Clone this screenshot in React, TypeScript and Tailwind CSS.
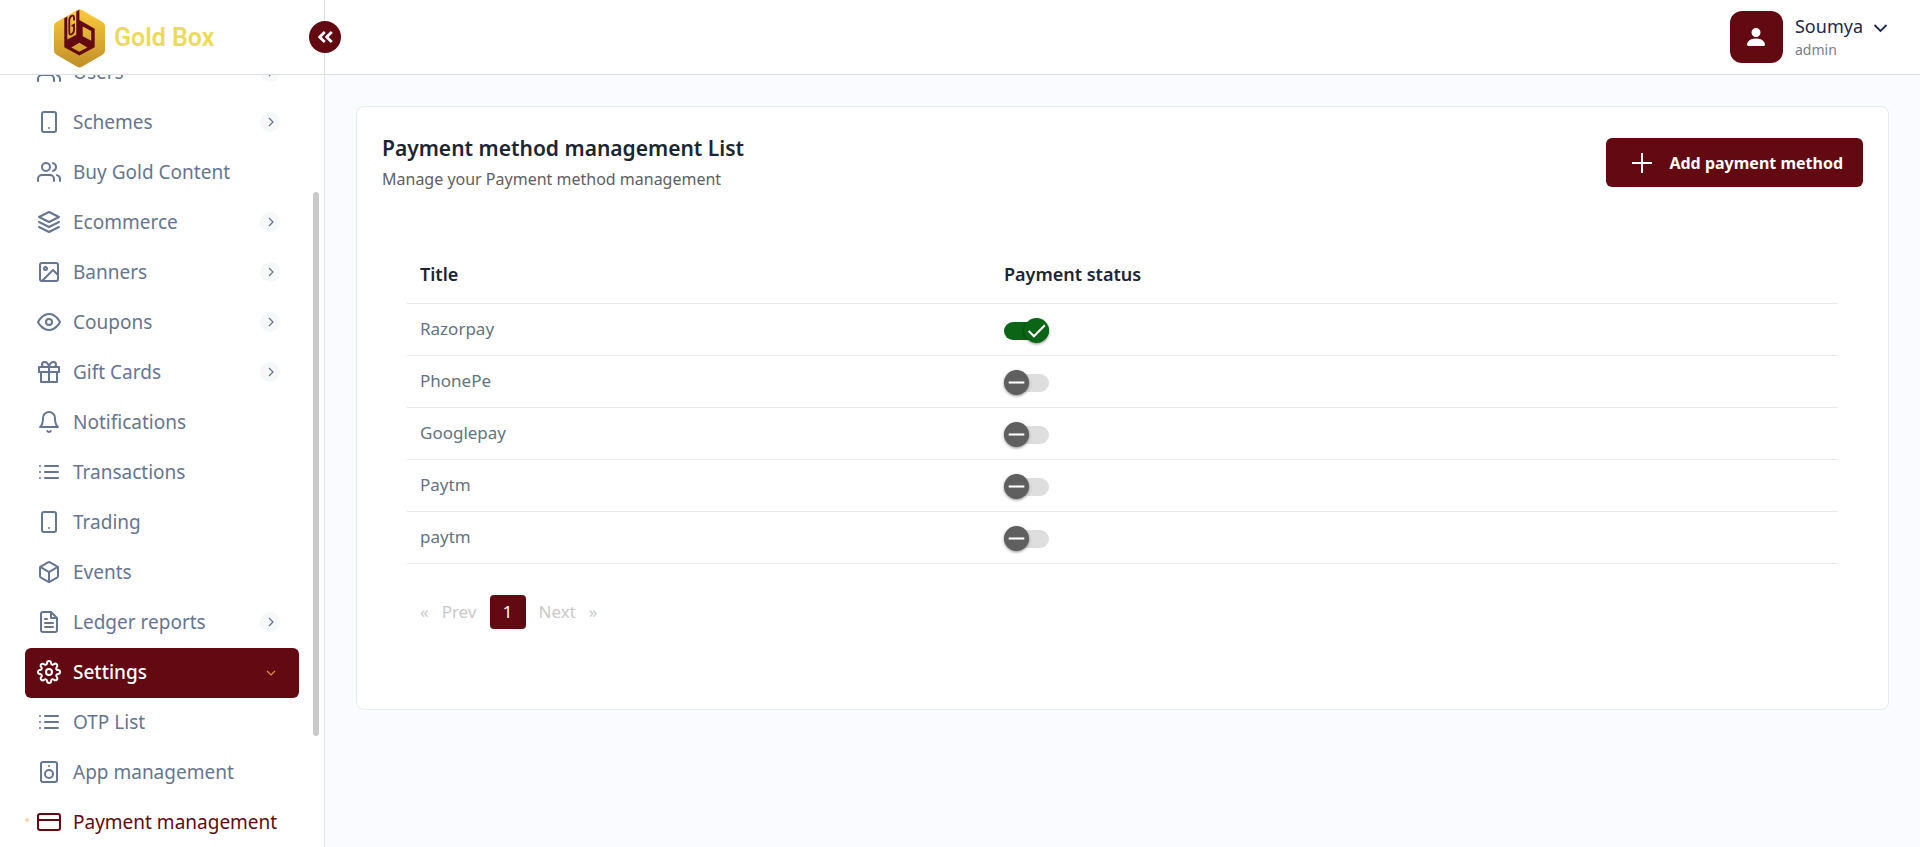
import { useState } from "react";
import {
  FiBell,
  FiBox,
  FiCreditCard,
  FiEye,
  FiFileText,
  FiGift,
  FiImage,
  FiLayers,
  FiList,
  FiSettings,
  FiSmartphone,
  FiSpeaker,
  FiUsers,
} from "react-icons/fi";
import { BsPersonFill } from "react-icons/bs";
import type { IconType } from "react-icons";

type NavItem = {
  label: string;
  icon: IconType;
  expandable?: boolean;
  state?: "open" | "current";
};

const navItems: NavItem[] = [
  { label: "Users", icon: FiUsers, expandable: true },
  { label: "Schemes", icon: FiSmartphone, expandable: true },
  { label: "Buy Gold Content", icon: FiUsers },
  { label: "Ecommerce", icon: FiLayers, expandable: true },
  { label: "Banners", icon: FiImage, expandable: true },
  { label: "Coupons", icon: FiEye, expandable: true },
  { label: "Gift Cards", icon: FiGift, expandable: true },
  { label: "Notifications", icon: FiBell },
  { label: "Transactions", icon: FiList },
  { label: "Trading", icon: FiSmartphone },
  { label: "Events", icon: FiBox },
  { label: "Ledger reports", icon: FiFileText, expandable: true },
  { label: "Settings", icon: FiSettings, expandable: true, state: "open" },
  { label: "OTP List", icon: FiList },
  { label: "App management", icon: FiSpeaker },
  { label: "Payment management", icon: FiCreditCard, state: "current" },
];

const initialMethods = [
  { id: 1, title: "Razorpay", enabled: true },
  { id: 2, title: "PhonePe", enabled: false },
  { id: 3, title: "Googlepay", enabled: false },
  { id: 4, title: "Paytm", enabled: false },
  { id: 5, title: "paytm", enabled: false },
];

function Logo() {
  return (
    <svg viewBox="0 0 53 60" className="h-[60px] w-[53px]" aria-hidden="true">
      <defs>
        <linearGradient id="gold" x1="0" y1="0" x2="0" y2="1">
          <stop offset="0" stopColor="#fcca3c" />
          <stop offset="1" stopColor="#c08f28" />
        </linearGradient>
      </defs>
      <path
        d="M24.1 2 Q26.5 .8 28.9 2 L49.5 14 Q52 15.4 52 18.4 V42.4 Q52 45.4 49.5 46.8 L28.9 58.8 Q26.5 60 24.1 58.8 L3.5 46.8 Q1 45.4 1 42.4 V18.4 Q1 15.4 3.5 14 Z"
        fill="url(#gold)"
      />
      <path
        fillRule="evenodd"
        fill="#620912"
        d="M11.3 10.2 L14.3 8.4 V31.5 L23.3 26.8 V3.4 L26.4 1.6 V12 L41.7 20.8 V39.2 L26.4 47.6 L11.3 39.2 Z M29.7 18.6 V28.2 L38.2 32.8 V23 Z M26.4 34.8 L18.3 39.4 L26.4 43.8 L34.4 39.4 Z"
      />
      <path
        d="M21 12.5 V10 Q21 6.6 18.6 7.9 Q16.3 9.2 16.3 12.4 V24.2 Q16.3 27.4 18.6 26.2 Q21 25 21 21.8 V16.8 L18.6 18.1"
        fill="none"
        stroke="#620912"
        strokeWidth="1.8"
      />
    </svg>
  );
}

function Chevron({ open }: { open?: boolean }) {
  return (
    <span
      className={
        open
          ? "flex size-5 items-center justify-center text-[#e0913f]"
          : "flex size-5 items-center justify-center rounded-full bg-[#f5f7f9] text-[#64748b]"
      }
    >
      <svg
        viewBox="0 0 12 12"
        className={open ? "ml-0.5 mt-0.5 size-3 rotate-90" : "ml-0.5 size-3"}
        fill="none"
        stroke="currentColor"
        strokeWidth="1.2"
        aria-hidden="true"
      >
        <path d="M4 2 L8 6 L4 10" />
      </svg>
    </span>
  );
}

function NavLink({ item }: { item: NavItem }) {
  const Icon = item.icon;
  const tone =
    item.state === "open"
      ? "bg-[#620912] font-medium text-white"
      : item.state === "current"
        ? "text-[#620912]"
        : "text-[#667590]";
  return (
    <li>
      <a
        href="#"
        aria-current={item.state === "current" ? "page" : undefined}
        className={`relative flex h-[50px] items-center gap-3 rounded-md pb-0.5 pl-3 pr-[19px] text-[19px] ${tone}`}
      >
        {item.state === "current" && (
          <span className="absolute left-0 top-[20px] size-1 rounded-full bg-[#ffd3a8]" />
        )}
        <Icon className="size-6 shrink-0" aria-hidden="true" />
        <span className="flex-1 whitespace-nowrap">{item.label}</span>
        {item.expandable && <Chevron open={item.state === "open"} />}
      </a>
    </li>
  );
}

function Sidebar() {
  return (
    <aside className="relative w-[325px] shrink-0 overflow-hidden border-r border-[#e2e6ea] bg-white">
      <nav aria-label="Main">
        <ul className="-mt-[27px] px-[25px]">
          {navItems.map((item) => (
            <NavLink key={item.label} item={item} />
          ))}
        </ul>
      </nav>
      <div className="absolute right-[5px] top-[117px] h-[544px] w-1.5 rounded-full bg-[#c9c9c9]" />
    </aside>
  );
}

function Header() {
  return (
    <header className="flex h-[75px] shrink-0 border-b border-[#dcdfe3] bg-white">
      <div className="relative flex w-[325px] items-center gap-2 border-r border-[#dcdfe3] pl-[53px] pt-0.5">
        <Logo />
        <span className="font-['Roboto',sans-serif] text-[25px] font-semibold text-[#ecdb57]">
          Gold Box
        </span>
        <button
          type="button"
          aria-label="Collapse sidebar"
          className="absolute -right-[17px] top-[21px] flex size-8 items-center justify-center rounded-full bg-[#620912] text-white"
        >
          <svg
            viewBox="0 0 16 12"
            className="h-3 w-4"
            fill="none"
            stroke="currentColor"
            strokeWidth="2.8"
            strokeLinejoin="round"
            aria-hidden="true"
          >
            <path d="M7.8 1 L2.6 6 L7.8 11 M14.8 1 L9.6 6 L14.8 11" />
          </svg>
        </button>
      </div>
      <div className="flex flex-1 items-center justify-end pr-8">
        <button type="button" className="flex items-center gap-3 text-left">
          <span className="flex h-[52px] w-[53px] items-center justify-center rounded-xl bg-[#620912] text-white">
            <BsPersonFill className="size-6" aria-hidden="true" />
          </span>
          <span className="flex flex-col pt-0.5">
            <span className="flex items-center gap-2.5 text-lg leading-6 text-[#1b2850]">
              Soumya
              <svg
                viewBox="0 0 15 14"
                className="mt-1 h-3.5 w-[15px]"
                fill="none"
                stroke="currentColor"
                strokeWidth="1.8"
                aria-hidden="true"
              >
                <path d="M1.5 4 L7.5 10 L13.5 4" />
              </svg>
            </span>
            <span className="text-sm leading-6 text-[#737f92]">admin</span>
          </span>
        </button>
      </div>
    </header>
  );
}

function StatusSwitch({
  label,
  checked,
  onChange,
}: {
  label: string;
  checked: boolean;
  onChange: () => void;
}) {
  return (
    <label className="relative mt-1 flex h-[26px] w-[45px] cursor-pointer items-center">
      <input
        type="checkbox"
        role="switch"
        aria-label={`${label} status`}
        checked={checked}
        onChange={onChange}
        className={`h-[18px] w-full cursor-pointer appearance-none rounded-full ${checked ? "bg-[#0b6516]" : "bg-[#dedede]"}`}
      />
      <span
        className={`pointer-events-none absolute top-0 flex size-[25px] items-center justify-center rounded-full text-white shadow-[0_1px_3px_rgba(0,0,0,0.45)] ${checked ? "right-0 bg-[#0b6516]" : "left-0 bg-[#5f5f5f]"}`}
      >
        <svg
          viewBox="0 0 24 24"
          className="size-[25px]"
          fill="none"
          stroke="currentColor"
          strokeWidth="2"
          aria-hidden="true"
        >
          {checked ? <path d="M4.5 12.5 L9.5 17.5 L20 7" /> : <path d="M4.5 12 H19.5" />}
        </svg>
      </span>
    </label>
  );
}

export default function App() {
  const [methods, setMethods] = useState(initialMethods);

  const toggle = (id: number) =>
    setMethods((list) =>
      list.map((m) => (m.id === id ? { ...m, enabled: !m.enabled } : m)),
    );

  return (
    <div className="flex h-screen flex-col overflow-hidden bg-[#fafbfe] font-['Noto_Sans',sans-serif]">
      <Header />
      <div className="flex min-h-0 flex-1">
        <Sidebar />
        <main className="min-w-0 flex-1 px-[31px] pt-[31px]">
          <section className="rounded-lg border border-[#e5e9ed] bg-white px-[25px] pb-20 pt-[31px]">
            <div className="flex items-start justify-between">
              <div className="-mt-1.5">
                <h1 className="text-[21px] font-semibold leading-8 text-[#1b2533]">
                  Payment method management List
                </h1>
                <p className="text-base leading-[30px] text-[#5e6064]">
                  Manage your Payment method management
                </p>
              </div>
              <button
                type="button"
                className="flex h-[49px] items-center gap-4 rounded-md bg-[#620912] pl-[25px] pr-5 text-base font-bold text-white"
              >
                <svg
                  viewBox="0 0 22 22"
                  className="size-[22px]"
                  fill="none"
                  stroke="currentColor"
                  strokeWidth="2"
                  aria-hidden="true"
                >
                  <path d="M11 1 V21 M1 11 H21" />
                </svg>
                Add payment method
              </button>
            </div>

            <div className="px-[25px] pt-[52px]">
              <table className="w-full table-fixed border-collapse text-left">
                <thead>
                  <tr className="h-[57px] border-b border-[#e8e9eb] text-lg text-[#1b2533]">
                    <th className="w-[584px] px-[13px] font-semibold">Title</th>
                    <th className="px-[13px] font-semibold">Payment status</th>
                  </tr>
                </thead>
                <tbody>
                  {methods.map((m) => (
                    <tr key={m.id} className="h-[52px] border-b border-[#e8e9eb]">
                      <td className="px-[13px] text-[17px] text-[#637381]">{m.title}</td>
                      <td className="px-[13px]">
                        <StatusSwitch
                          label={m.title}
                          checked={m.enabled}
                          onChange={() => toggle(m.id)}
                        />
                      </td>
                    </tr>
                  ))}
                </tbody>
              </table>

              <nav
                aria-label="Pagination"
                className="mt-[31px] flex items-center text-[17px] text-[#c9c9c9]"
              >
                <button type="button" disabled className="pl-[13px]">
                  «
                </button>
                <button type="button" disabled className="px-[13px]">
                  Prev
                </button>
                <button
                  type="button"
                  aria-current="page"
                  className="h-[34px] w-9 rounded bg-[#620912] text-white"
                >
                  1
                </button>
                <button type="button" disabled className="px-[13px]">
                  Next
                </button>
                <button type="button" disabled>
                  »
                </button>
              </nav>
            </div>
          </section>
        </main>
      </div>
    </div>
  );
}
